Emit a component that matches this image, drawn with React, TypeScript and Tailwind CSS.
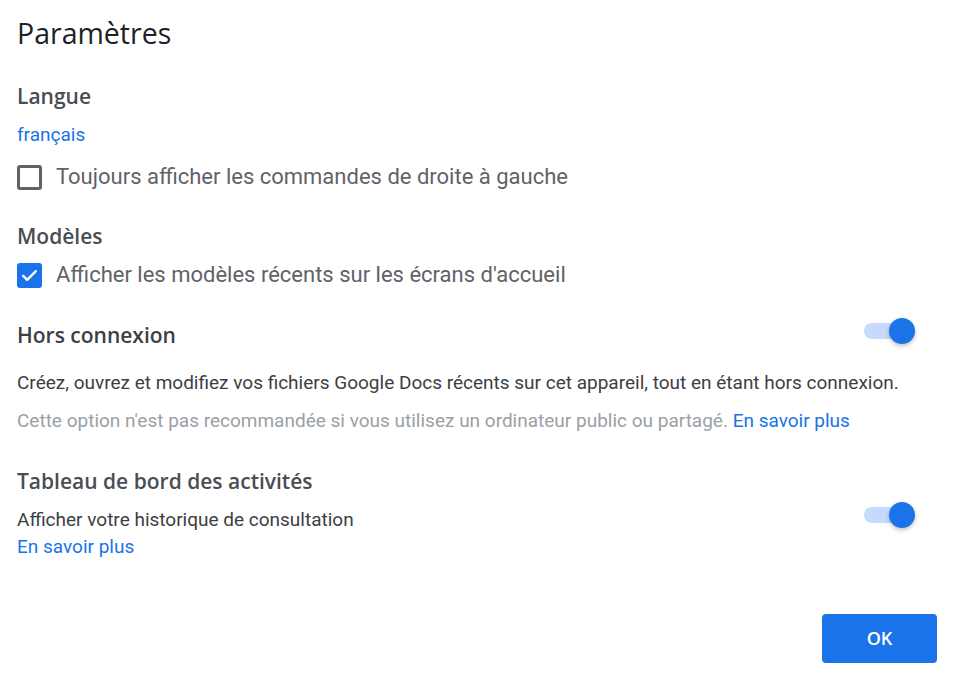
import React from "react";

const head = "font-['Open_Sans','Roboto',sans-serif]";
const body = "font-['Roboto','Liberation_Sans',sans-serif]";

function Toggle({ className = "" }: { className?: string }) {
  return (
    <div className={`relative w-[52px] h-[28px] flex items-center ${className}`}>
      <div className="ml-[1px] w-[42px] h-[16px] rounded-full bg-[#c6dafc]" />
      <div className="absolute right-0 top-[1px] w-[26px] h-[26px] rounded-full bg-[#1a73e8] shadow-[0_2px_4px_rgba(0,0,0,0.25)]" />
    </div>
  );
}

export default function App() {
  return (
    <div className={`w-[968px] h-[684px] bg-white flex flex-col pl-[17px] pr-[31px] ${body}`}>
      <h1 className={`${head} text-[28.5px] text-[#202124] mt-[13px] leading-[40px]`}>Paramètres</h1>

      <h2 className={`${head} text-[21px] font-semibold text-[#4a4d51] mt-[29px] leading-[28px]`}>Langue</h2>
      <a className="text-[19px] text-[#1a73e8] leading-[24px] mt-[13px] w-fit">français</a>
      <label className="flex items-center gap-[14px] mt-[16px]">
        <span className="w-[25px] h-[25px] rounded-[3px] border-[3px] border-[#5f6368]" />
        <span className="text-[22px] text-[#5f6368] leading-[28px]">Toujours afficher les commandes de droite à gauche</span>
      </label>

      <h2 className={`${head} text-[21px] font-semibold text-[#4a4d51] mt-[31px] leading-[28px]`}>Modèles</h2>
      <label className="flex items-center gap-[14px] mt-[11px]">
        <span className="w-[25px] h-[25px] rounded-[3px] bg-[#1a73e8] flex items-center justify-center">
          <svg width="19" height="19" viewBox="0 0 24 24" fill="none">
            <path d="M4 12.5l5 5L20 6.5" stroke="white" strokeWidth="3" strokeLinecap="round" strokeLinejoin="round" />
          </svg>
        </span>
        <span className="text-[22px] text-[#5f6368] leading-[28px]">Afficher les modèles récents sur les écrans d'accueil</span>
      </label>

      <div className="flex items-start justify-between mt-[31px] pr-[22px]">
        <h2 className={`${head} text-[21px] font-semibold text-[#3c4043] leading-[28px] mt-[1px]`}>Hors connexion</h2>
        <Toggle className="-mt-[3px]" />
      </div>
      <p className="text-[19px] text-[#3c4043] leading-[24px] mt-[22px]">
        Créez, ouvrez et modifiez vos fichiers Google Docs récents sur cet appareil, tout en étant hors connexion.
      </p>
      <p className="text-[19px] text-[#9aa0a6] leading-[24px] mt-[14px]">
        Cette option n'est pas recommandée si vous utilisez un ordinateur public ou partagé.{" "}
        <a className="text-[#1a73e8]">En savoir plus</a>
      </p>

      <h2 className={`${head} text-[21px] font-semibold text-[#4a4d51] mt-[34px] leading-[28px]`}>Tableau de bord des activités</h2>
      <div className="flex items-start justify-between mt-[11px] pr-[22px]">
        <div className="flex flex-col">
          <span className="text-[19px] text-[#3c4043] leading-[27px]">Afficher votre historique de consultation</span>
          <a className="text-[19px] text-[#1a73e8] leading-[27px] w-fit">En savoir plus</a>
        </div>
        <Toggle className="-mt-[5px]" />
      </div>

      <div className="flex justify-end mt-[54px]">
        <button className={`${head} w-[115px] h-[49px] rounded-[4px] bg-[#1a73e8] text-white text-[18px] font-semibold`}>OK</button>
      </div>
    </div>
  );
}
